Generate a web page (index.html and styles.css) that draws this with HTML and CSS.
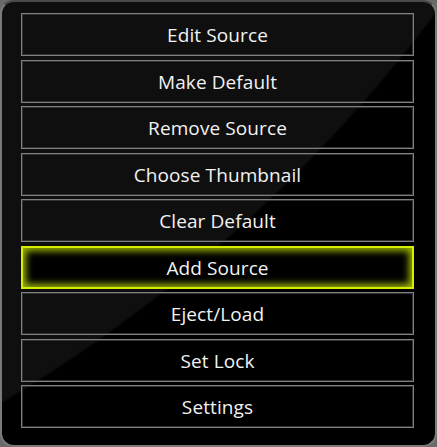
FILE: index.html
```html
<!DOCTYPE html>
<html lang="en">
<head>
  <meta charset="UTF-8">
  <meta name="viewport" content="width=device-width, initial-scale=1.0">
  <title>Source Menu</title>
  <link rel="stylesheet" href="styles.css">
</head>
<body>
  <div class="menu-panel">
    <ul class="menu-list">
      <li><button class="menu-button">Edit Source</button></li>
      <li><button class="menu-button">Make Default</button></li>
      <li><button class="menu-button">Remove Source</button></li>
      <li><button class="menu-button">Choose Thumbnail</button></li>
      <li><button class="menu-button">Clear Default</button></li>
      <li><button class="menu-button focused">Add Source</button></li>
      <li><button class="menu-button">Eject/Load</button></li>
      <li><button class="menu-button">Set Lock</button></li>
      <li><button class="menu-button">Settings</button></li>
    </ul>
  </div>
</body>
</html>
```

FILE: styles.css
```css
html, body {
  margin: 0;
  padding: 0;
  background-color: #6a6a6a;
}
body {
  font-family: "Open Sans", "Noto Sans", Arial, sans-serif;
  width: 437px;
  height: 447px;
}
.menu-panel {
  box-sizing: border-box;
  width: 437px;
  height: 447px;
  border: 2px solid #7a7a7a;
  border-top-color: #4a4a4a;
  border-radius: 14px;
  padding: 11px 21px 0 19px;
  /* glossy sheen: lighter upper-left, black lower-right */
  background: radial-gradient(circle at -773px -896px, #0f0f0f 1508px, #000 1511px);
}
.menu-list {
  list-style: none;
  margin: 0;
  padding: 0;
  display: flex;
  flex-direction: column;
  gap: 3.5px;
}
.menu-button {
  box-sizing: border-box;
  display: block;
  width: 100%;
  height: 43px;
  padding: 1px 0 0 0;
  background: transparent;
  border: 1px solid #808080;
  box-shadow: inset 0 0 0 1px #333;
  color: #f2f2f2;
  font-family: inherit;
  font-size: 19px;
  letter-spacing: 0.1px;
  cursor: pointer;
}
.menu-button.focused {
  background-color: #000;
  border: 2px solid #d6ee00;
  box-shadow: inset 0 0 7px 3px #9bb400;
}
```
